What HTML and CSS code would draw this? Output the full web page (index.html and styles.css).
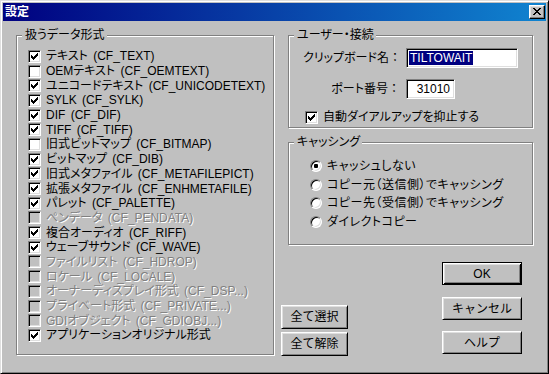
FILE: index.html
```html
<!DOCTYPE html>
<html>
<head>
    <title>設定</title>
    <link rel="stylesheet" href="styles.css">
</head>
<body>

<svg class="defs" width="0" height="0">
    <symbol id="check" viewBox="0 0 7 7">
        <path d="M6 0h1v1h-1z M5 1h2v1h-2z M0 2h1v1h-1z M4 2h3v1h-3z M0 3h2v1h-2z M3 3h3v1h-3z M0 4h5v1h-5z M1 5h3v1h-3z M2 6h1v1h-1z"/>
    </symbol>
</svg>

<div class="window">
    <div class="titlebar">
        <span class="title">設定</span>
        <button class="close">
            <svg width="8" height="7" viewBox="0 0 8 7" shape-rendering="crispEdges">
                <path d="M0 0h2v1h-2z M6 0h2v1h-2z M1 1h2v1h-2z M5 1h2v1h-2z M2 2h4v1h-4z M3 3h2v1h-2z M2 4h4v1h-4z M1 5h2v1h-2z M5 5h2v1h-2z M0 6h2v1h-2z M6 6h2v1h-2z"/>
            </svg>
        </button>
    </div>

    <div class="content">
        <div class="group formats">
            <span class="legend">扱うデータ形式</span>
            <ul class="checks">
                <li><span class="box"><svg><use href="#check"/></svg></span>テキスト (CF_TEXT)</li>
                <li><span class="box"></span>OEMテキスト (CF_OEMTEXT)</li>
                <li><span class="box"><svg><use href="#check"/></svg></span>ユニコードテキスト (CF_UNICODETEXT)</li>
                <li><span class="box"><svg><use href="#check"/></svg></span>SYLK (CF_SYLK)</li>
                <li><span class="box"><svg><use href="#check"/></svg></span>DIF (CF_DIF)</li>
                <li><span class="box"><svg><use href="#check"/></svg></span>TIFF (CF_TIFF)</li>
                <li><span class="box"></span>旧式ビットマップ (CF_BITMAP)</li>
                <li><span class="box"><svg><use href="#check"/></svg></span>ビットマップ (CF_DIB)</li>
                <li><span class="box"><svg><use href="#check"/></svg></span>旧式メタファイル (CF_METAFILEPICT)</li>
                <li><span class="box"><svg><use href="#check"/></svg></span>拡張メタファイル (CF_ENHMETAFILE)</li>
                <li><span class="box"><svg><use href="#check"/></svg></span>パレット (CF_PALETTE)</li>
                <li class="disabled"><span class="box"></span>ペンデータ (CF_PENDATA)</li>
                <li><span class="box"><svg><use href="#check"/></svg></span>複合オーディオ (CF_RIFF)</li>
                <li><span class="box"><svg><use href="#check"/></svg></span>ウェーブサウンド (CF_WAVE)</li>
                <li class="disabled"><span class="box"></span>ファイルリスト (CF_HDROP)</li>
                <li class="disabled"><span class="box"></span>ロケール (CF_LOCALE)</li>
                <li class="disabled"><span class="box"></span>オーナーディスプレイ形式 (CF_DSP...)</li>
                <li class="disabled"><span class="box"></span>プライベート形式 (CF_PRIVATE...)</li>
                <li class="disabled"><span class="box"></span>GDIオブジェクト (CF_GDIOBJ...)</li>
                <li><span class="box"><svg><use href="#check"/></svg></span>アプリケーションオリジナル形式</li>
            </ul>
        </div>

        <div class="side">
            <div class="group connection">
                <span class="legend">ユーザー・接続</span>
                <div class="fields">
                    <label>クリップボード名<span class="fw">：</span></label>
                    <div class="edit name"><span class="selected">TILTOWAIT</span></div>
                    <label>ポート番号<span class="fw">：</span></label>
                    <div class="edit port">31010</div>
                </div>
                <div class="option"><span class="box"><svg><use href="#check"/></svg></span>自動ダイアルアップを抑止する</div>
            </div>

            <div class="group caching">
                <span class="legend">キャッシング</span>
                <ul class="radios">
                    <li><span class="radio on"></span>キャッシュしない</li>
                    <li><span class="radio"></span>コピー元（送信側）でキャッシング</li>
                    <li><span class="radio"></span>コピー先（受信側）でキャッシング</li>
                    <li><span class="radio"></span>ダイレクトコピー</li>
                </ul>
            </div>

            <div class="actions">
                <div class="select-btns">
                    <button class="btn small">全て選択</button>
                    <button class="btn small">全て解除</button>
                </div>
                <div class="dialog-btns">
                    <button class="btn default">OK</button>
                    <button class="btn">キャンセル</button>
                    <button class="btn help">ヘルプ</button>
                </div>
            </div>
        </div>
    </div>
</div>

</body>
</html>
```

FILE: styles.css
```css
body {
    margin: 0;
    font-family: "Liberation Sans", "Noto Sans CJK JP", sans-serif;
    font-size: 12px;
    font-feature-settings: "palt";
    background-color: #c0c0c0;
    color: #000;
}

.defs {
    position: absolute;
    width: 0;
    height: 0;
}

.fw {
    font-feature-settings: normal;
}

.window {
    width: 549px;
    height: 374px;
    box-sizing: border-box;
    padding: 2px;
    border: 1px solid;
    border-color: #dfdfdf #000 #000 #dfdfdf;
    box-shadow: inset 1px 1px #fff, inset -1px -1px #808080;
    background-color: #c0c0c0;
}

/* title bar */
.titlebar {
    height: 18px;
    display: flex;
    align-items: center;
    justify-content: space-between;
    padding: 0 1px 0 2px;
    background: linear-gradient(to right, #000080, #1084d0);
}

.title {
    color: #fff;
    font-weight: bold;
    line-height: 14px;
}

.close {
    width: 16px;
    height: 14px;
    padding: 0;
    display: flex;
    align-items: center;
    justify-content: center;
    border: 1px solid;
    border-color: #fff #000 #000 #fff;
    box-shadow: inset -1px -1px #808080, inset 1px 1px #dfdfdf;
    background-color: #c0c0c0;
}

.close svg {
    display: block;
    margin: 0 0 1px 0;
}

/* layout */
.content {
    display: flex;
    padding: 14px 0 0 13px;
}

.group {
    position: relative;
    box-sizing: border-box;
    border: 1px solid #808080;
    box-shadow: 1px 1px #fff, inset 1px 1px #fff;
}

.legend {
    position: absolute;
    top: -8px;
    left: 5px;
    padding: 0 2px 0 3px;
    line-height: 14px;
    background-color: #c0c0c0;
    white-space: nowrap;
}

.formats {
    width: 258px;
    height: 320px;
    padding: 13px 0 0 11px;
}

.side {
    width: 252px;
    margin-left: 7px;
    display: flex;
    flex-direction: column;
}

.connection {
    width: 245px;
    height: 93px;
    margin-left: 7px;
}

.caching {
    width: 245px;
    height: 103px;
    margin: 14px 0 0 7px;
}

/* checkboxes */
.checks {
    list-style: none;
    margin: 0;
    padding: 0;
}

.checks li,
.option {
    height: 14.7px;
    display: flex;
    align-items: center;
    gap: 5px;
    white-space: pre;
    word-spacing: 2px;
    line-height: 14px;
}

.box {
    flex: none;
    width: 13px;
    height: 13px;
    box-sizing: border-box;
    display: flex;
    align-items: center;
    justify-content: center;
    border: 1px solid;
    border-color: #808080 #fff #fff #808080;
    box-shadow: inset 1px 1px #000, inset -1px -1px #dfdfdf;
    background-color: #fff;
}

.box svg {
    width: 7px;
    height: 7px;
    shape-rendering: crispEdges;
}

.checks li.disabled {
    color: #808080;
    text-shadow: 1px 1px 0 #fff;
}

.checks li.disabled .box {
    background-color: #c0c0c0;
}

/* user / connection */
.fields {
    display: grid;
    grid-template-columns: 97px auto;
    column-gap: 6px;
    row-gap: 11px;
    align-items: center;
    padding: 12px 0 0 14px;
}

.fields label {
    text-align: right;
    white-space: nowrap;
    line-height: 14px;
}

.edit {
    height: 20px;
    box-sizing: border-box;
    padding: 2px 3px 0 2px;
    border: 1px solid;
    border-color: #808080 #fff #fff #808080;
    box-shadow: inset 1px 1px #000, inset -1px -1px #dfdfdf;
    background-color: #fff;
    line-height: 14px;
    white-space: nowrap;
}

.edit.name {
    width: 112px;
}

.edit.port {
    width: 49px;
    text-align: right;
    padding-right: 4px;
}

.selected {
    display: inline-block;
    padding: 0 1px;
    background-color: #000080;
    color: #fff;
}

.option {
    margin: 11px 0 0 16px;
}

/* caching radios */
.radios {
    list-style: none;
    margin: 0;
    padding: 14px 0 0 21px;
}

.radios li {
    height: 18.5px;
    display: flex;
    align-items: center;
    gap: 5px;
    white-space: nowrap;
    letter-spacing: 0.5px;
    line-height: 14px;
}

.radio {
    flex: none;
    position: relative;
    width: 12px;
    height: 12px;
    box-sizing: border-box;
    border-radius: 50%;
    border: 1px solid;
    border-color: #808080 #fff #fff #808080;
    box-shadow: inset 1px 1px #000, inset -1px -1px #dfdfdf;
    background-color: #fff;
}

.radio.on::after {
    content: "";
    position: absolute;
    left: 3px;
    top: 3px;
    width: 4px;
    height: 4px;
    border-radius: 1px;
    background-color: #000;
}

/* buttons */
.actions {
    display: flex;
    justify-content: space-between;
    align-items: flex-start;
    padding-right: 11px;
}

.select-btns {
    display: flex;
    flex-direction: column;
    gap: 3px;
    margin-top: 60px;
}

.dialog-btns {
    display: flex;
    flex-direction: column;
    gap: 12px;
    margin-top: 17px;
}

.btn {
    width: 80px;
    height: 23px;
    padding: 0;
    font: inherit;
    font-feature-settings: normal;
    color: #000;
    border: 1px solid;
    border-color: #fff #000 #000 #fff;
    box-shadow: inset 1px 1px #dfdfdf, inset -1px -1px #808080;
    background-color: #c0c0c0;
    line-height: 14px;
}

.btn.small {
    width: 67px;
    height: 24px;
}

.btn.default {
    border-color: #000;
    box-shadow: inset 1px 1px #fff, inset -1px -1px #000, inset 2px 2px #dfdfdf, inset -2px -2px #808080;
}

.btn.help {
    margin-top: -1px;
}
```
